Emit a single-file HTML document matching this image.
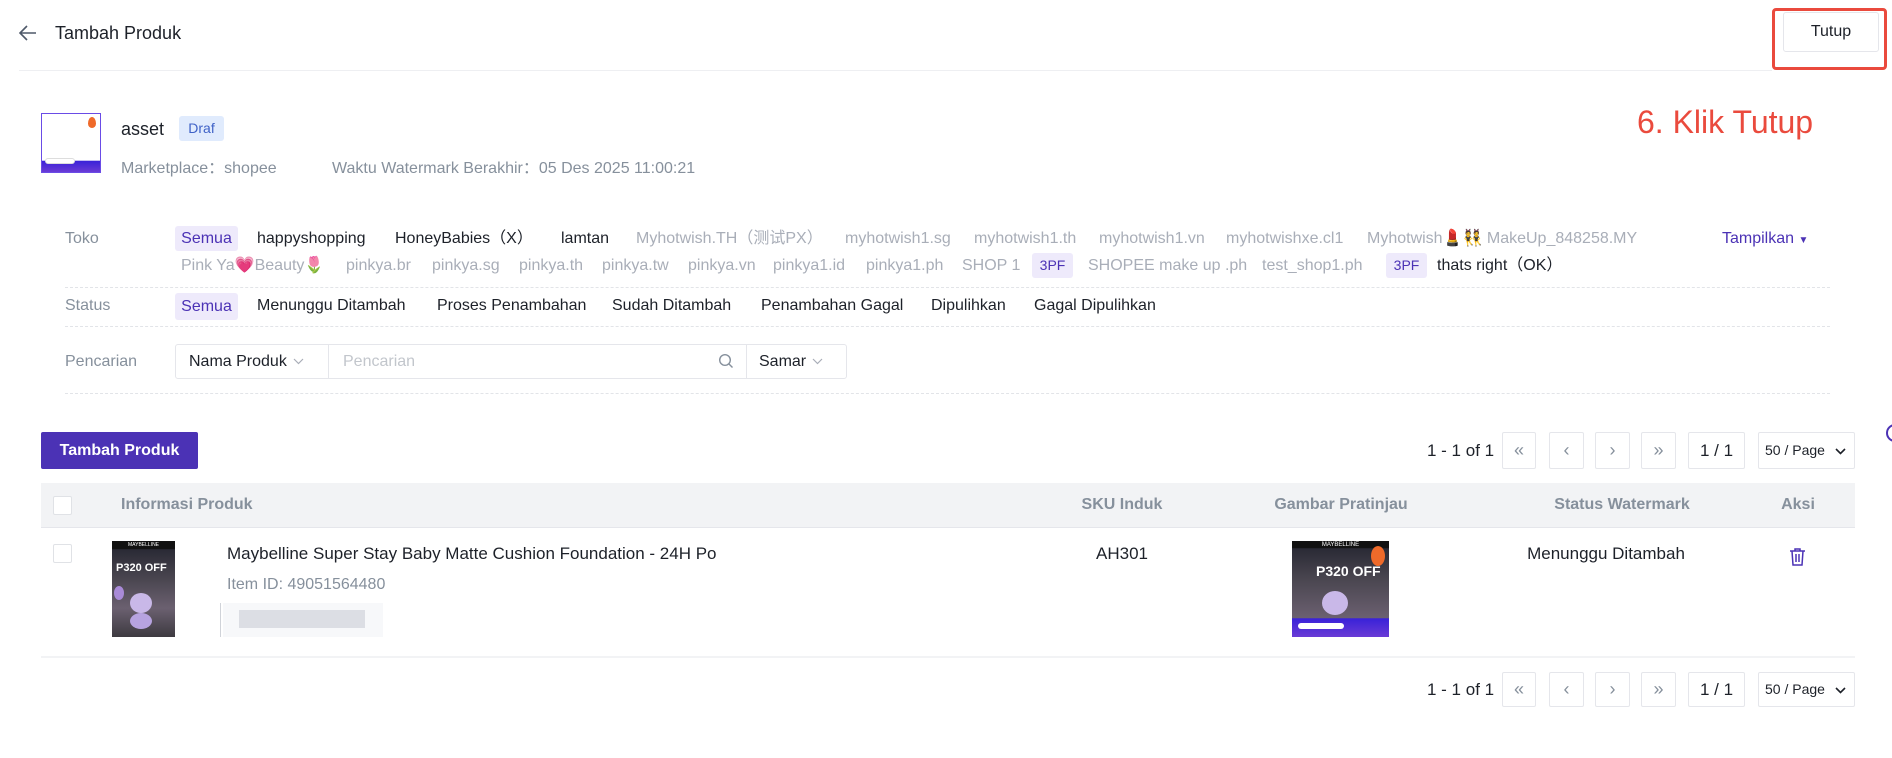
<!DOCTYPE html>
<html><head><meta charset="utf-8"><style>
*{box-sizing:border-box;margin:0;padding:0}
body{width:1892px;height:758px;background:#fff;font-family:"Liberation Sans","Noto Sans CJK SC",sans-serif;color:#1d2129;position:relative;overflow:hidden;font-size:16px}
.a{position:absolute;white-space:nowrap;line-height:20px}
.g{color:#a9aeb8}
.lbl{color:#86909c}
.tag{position:absolute;background:#eeeafb;color:#4b32b5;border-radius:3px;text-align:center}
.dash{position:absolute;left:65px;width:1765px;border-top:1px dashed #e2e4e8}
.pb{position:absolute;border:1px solid #e5e6eb;border-radius:2px;text-align:center;color:#86909c;font-size:18px}
.hd{position:absolute;top:495px;color:#86909c;font-size:16px;font-weight:bold;transform:translateX(-50%);line-height:20px}
.cb{position:absolute;width:19px;height:19px;border:1px solid #e0e2e6;border-radius:2px;background:#fff}
.img{position:absolute;background:linear-gradient(180deg,#111 0,#111 8%,#2a2a35 9%,#4a4650 40%,#6b6070 70%,#3d3a40 100%);overflow:hidden}
.chev{display:inline-block;vertical-align:middle;margin-left:6px}
</style></head><body>
<svg class="a" style="left:18px;top:24px" width="19" height="18" viewBox="0 0 19 18"><path d="M18 9H2M9 2L2 9l7 7" stroke="#4e5969" stroke-width="1.6" fill="none"/></svg>
<div class="a" style="left:55px;top:23px;font-size:18px;color:#1d2129">Tambah Produk</div>
<div class="a" style="left:1783px;top:12px;width:96px;height:40px;border:1px solid #e5e6eb;border-radius:3px;text-align:center;line-height:38px;font-size:16px">Tutup</div>
<div class="a" style="left:1772px;top:8px;width:115px;height:62px;border:3px solid #ea4a3d;border-radius:4px"></div>
<div class="a" style="left:19px;top:70px;width:1753px;border-top:1px solid #eeeff2"></div>

<div class="a" style="left:41px;top:113px;width:60px;height:60px;border:1px solid #6a4ce6;background:linear-gradient(180deg,#fff 0,#fff 80%,#3a22d8 81%,#6a3bd6 100%)"></div>
<div class="a" style="left:45px;top:158px;width:30px;height:6px;background:#fff;border:1px solid #ddd;border-radius:3px"></div>
<div class="a" style="left:88px;top:117px;width:8px;height:11px;background:#ef6a2a;border-radius:50% 50% 50% 50%/60% 60% 40% 40%"></div>
<div class="a" style="left:121px;top:118px;font-size:18px;line-height:22px">asset</div>
<div class="tag" style="left:179px;top:116px;width:45px;height:25px;line-height:25px;background:#e0ebfd;color:#3f62c7;font-size:14px">Draf</div>
<div class="a lbl" style="left:121px;top:159px">Marketplace：shopee</div>
<div class="a lbl" style="left:332px;top:159px">Waktu Watermark Berakhir：05 Des 2025 11:00:21</div>
<div class="a" style="left:1637px;top:102px;font-size:32px;line-height:40px;color:#ea4a3d">6. Klik Tutup</div>

<div class="a lbl" style="left:65px;top:229px">Toko</div>
<div class="tag" style="left:175px;top:226px;width:63px;height:25px;line-height:25px">Semua</div>
<div class="a" style="left:257px;top:229px">happyshopping</div>
<div class="a" style="left:395px;top:229px">HoneyBabies（X）</div>
<div class="a" style="left:561px;top:229px">lamtan</div>
<div class="a g" style="left:636px;top:229px">Myhotwish.TH（测试PX）</div>
<div class="a g" style="left:845px;top:229px">myhotwish1.sg</div>
<div class="a g" style="left:974px;top:229px">myhotwish1.th</div>
<div class="a g" style="left:1099px;top:229px">myhotwish1.vn</div>
<div class="a g" style="left:1226px;top:229px">myhotwishxe.cl1</div>
<div class="a g" style="left:1367px;top:229px">Myhotwish💄👯 MakeUp_848258.MY</div>
<div class="a" style="left:1722px;top:229px;color:#4b32b5">Tampilkan <span style="font-size:10px">▼</span></div>
<div class="a g" style="left:181px;top:256px">Pink Ya<span style="color:#e83a6b">💗</span>Beauty🌷</div>
<div class="a g" style="left:346px;top:256px">pinkya.br</div>
<div class="a g" style="left:432px;top:256px">pinkya.sg</div>
<div class="a g" style="left:519px;top:256px">pinkya.th</div>
<div class="a g" style="left:602px;top:256px">pinkya.tw</div>
<div class="a g" style="left:688px;top:256px">pinkya.vn</div>
<div class="a g" style="left:773px;top:256px">pinkya1.id</div>
<div class="a g" style="left:866px;top:256px">pinkya1.ph</div>
<div class="a g" style="left:962px;top:256px">SHOP 1</div>
<div class="tag" style="left:1032px;top:253px;width:41px;height:25px;line-height:25px;font-size:14px">3PF</div>
<div class="a g" style="left:1088px;top:256px">SHOPEE make up .ph</div>
<div class="a g" style="left:1262px;top:256px">test_shop1.ph</div>
<div class="tag" style="left:1386px;top:253px;width:41px;height:25px;line-height:25px;font-size:14px">3PF</div>
<div class="a" style="left:1437px;top:256px">thats right（OK）</div>
<div class="dash" style="top:287px"></div>

<div class="a lbl" style="left:65px;top:296px">Status</div>
<div class="tag" style="left:175px;top:293px;width:63px;height:27px;line-height:27px">Semua</div>
<div class="a" style="left:257px;top:296px">Menunggu Ditambah</div>
<div class="a" style="left:437px;top:296px">Proses Penambahan</div>
<div class="a" style="left:612px;top:296px">Sudah Ditambah</div>
<div class="a" style="left:761px;top:296px">Penambahan Gagal</div>
<div class="a" style="left:931px;top:296px">Dipulihkan</div>
<div class="a" style="left:1034px;top:296px">Gagal Dipulihkan</div>
<div class="dash" style="top:326px"></div>

<div class="a lbl" style="left:65px;top:352px">Pencarian</div>
<div class="a" style="left:175px;top:344px;width:672px;height:35px;border:1px solid #e5e6eb;border-radius:3px"></div>
<div class="a" style="left:328px;top:345px;height:33px;border-left:1px solid #e5e6eb"></div>
<div class="a" style="left:746px;top:345px;height:33px;border-left:1px solid #e5e6eb"></div>
<div class="a" style="left:189px;top:352px">Nama Produk<svg class="chev" width="11" height="7" viewBox="0 0 11 7"><path d="M1 1l4.5 4.5L10 1" stroke="#a9aeb8" stroke-width="1.2" fill="none"/></svg></div>
<div class="a" style="left:343px;top:352px;color:#c2c6cc">Pencarian</div>
<svg class="a" style="left:718px;top:353px" width="16" height="16" viewBox="0 0 16 16"><circle cx="7" cy="7" r="5.3" stroke="#86909c" stroke-width="1.4" fill="none"/><path d="M11 11l3.5 3.5" stroke="#86909c" stroke-width="1.4"/></svg>
<div class="a" style="left:759px;top:352px">Samar<svg class="chev" width="11" height="7" viewBox="0 0 11 7"><path d="M1 1l4.5 4.5L10 1" stroke="#a9aeb8" stroke-width="1.2" fill="none"/></svg></div>
<div class="dash" style="top:393px"></div>

<div class="a" style="left:41px;top:432px;width:157px;height:37px;background:#4b32b5;border-radius:2px;color:#fff;font-weight:bold;font-size:16px;text-align:center;line-height:37px">Tambah Produk</div>
<div class="a" style="left:1886px;top:424px;width:18px;height:18px;border:2px solid #4b32b5;border-radius:50%"></div>

<div class="a" style="left:1427px;top:441px;font-size:17px">1 - 1 of 1</div>
<div class="pb" style="left:1502px;top:432px;width:34px;height:37px;line-height:35px">«</div>
<div class="pb" style="left:1549px;top:432px;width:35px;height:37px;line-height:35px">‹</div>
<div class="pb" style="left:1595px;top:432px;width:35px;height:37px;line-height:35px">›</div>
<div class="pb" style="left:1641px;top:432px;width:35px;height:37px;line-height:35px">»</div>
<div class="pb" style="left:1688px;top:432px;width:57px;height:37px;line-height:35px;color:#1d2129;font-size:17px">1 / 1</div>
<div class="pb" style="left:1758px;top:432px;width:97px;height:37px;line-height:35px;color:#1d2129;font-size:14px;text-align:left;padding-left:6px">50 / Page <svg style="position:absolute;right:8px;top:15px" width="11" height="7" viewBox="0 0 11 7"><path d="M1 1l4.5 4.5L10 1" stroke="#1d2129" stroke-width="1.6" fill="none"/></svg></div>

<div class="a" style="left:41px;top:483px;width:1814px;height:45px;background:#f2f3f5;border-bottom:1px solid #e5e6eb"></div>
<div class="cb" style="left:53px;top:496px"></div>
<div class="a" style="left:121px;top:495px;color:#86909c;font-weight:bold">Informasi Produk</div>
<div class="hd" style="left:1122px">SKU Induk</div>
<div class="hd" style="left:1341px">Gambar Pratinjau</div>
<div class="hd" style="left:1622px">Status Watermark</div>
<div class="hd" style="left:1798px">Aksi</div>

<div class="cb" style="left:53px;top:544px"></div>
<div class="img" style="left:112px;top:541px;width:63px;height:96px">
 <div style="position:absolute;left:0;top:1px;width:100%;text-align:center;color:#fff;font-size:5px">MAYBELLINE</div>
 <div style="position:absolute;left:4px;top:21px;color:#fff;font-size:11px;font-weight:bold">P320 OFF</div>
 <div style="position:absolute;left:18px;top:52px;width:22px;height:20px;border-radius:50%;background:#c9b8e8"></div>
 <div style="position:absolute;left:18px;top:72px;width:22px;height:16px;border-radius:50%;background:#b7a3e0"></div>
 <div style="position:absolute;left:2px;top:45px;width:10px;height:14px;border-radius:50%;background:#a98ad8"></div>
</div>
<div class="a" style="left:227px;top:544px;font-size:17px">Maybelline Super Stay Baby Matte Cushion Foundation - 24H Po</div>
<div class="a lbl" style="left:227px;top:575px">Item ID: 49051564480</div>
<div class="a" style="left:220px;top:603px;height:34px;border-left:1px solid #d0d3d9"></div>
<div class="a" style="left:223px;top:603px;width:160px;height:34px;background:#f7f8fa"></div>
<div class="a" style="left:239px;top:610px;width:126px;height:18px;background:#dcdee4"></div>
<div class="a" style="left:1122px;top:544px;font-size:17px;transform:translateX(-50%)">AH301</div>
<div class="img" style="left:1292px;top:541px;width:97px;height:96px;background:linear-gradient(180deg,#111 0,#111 7%,#2a2a35 8%,#4a4650 40%,#6b6070 80%,#3a22d8 81%,#6a3bd6 100%)">
 <div style="position:absolute;left:0;top:1px;width:100%;text-align:center;color:#fff;font-size:6px">MAYBELLINE</div>
 <div style="position:absolute;left:24px;top:22px;color:#fff;font-size:14px;font-weight:bold">P320 OFF</div>
 <div style="position:absolute;right:4px;top:5px;width:14px;height:20px;border-radius:50%;background:#ef6a2a"></div>
 <div style="position:absolute;left:30px;top:50px;width:26px;height:24px;border-radius:50%;background:#c9b8e8"></div>
 <div style="position:absolute;left:6px;top:82px;width:46px;height:6px;border-radius:3px;background:#fff"></div>
</div>
<div class="a" style="left:1606px;top:544px;font-size:17px;transform:translateX(-50%)">Menunggu Ditambah</div>
<svg class="a" style="left:1789px;top:547px" width="17" height="19" viewBox="0 0 17 19"><path d="M1 4h15M6 4V2h5v2M3 4l1 14h9l1-14M7 7v8M10 7v8" stroke="#4b32b5" stroke-width="1.5" fill="none"/></svg>
<div class="a" style="left:41px;top:656px;width:1814px;border-top:2px solid #f2f3f5"></div>

<div class="a" style="left:1427px;top:680px;font-size:17px">1 - 1 of 1</div>
<div class="pb" style="left:1502px;top:672px;width:34px;height:35px;line-height:33px">«</div>
<div class="pb" style="left:1549px;top:672px;width:35px;height:35px;line-height:33px">‹</div>
<div class="pb" style="left:1595px;top:672px;width:35px;height:35px;line-height:33px">›</div>
<div class="pb" style="left:1641px;top:672px;width:35px;height:35px;line-height:33px">»</div>
<div class="pb" style="left:1688px;top:672px;width:57px;height:35px;line-height:33px;color:#1d2129;font-size:17px">1 / 1</div>
<div class="pb" style="left:1758px;top:672px;width:97px;height:35px;line-height:33px;color:#1d2129;font-size:14px;text-align:left;padding-left:6px">50 / Page <svg style="position:absolute;right:8px;top:14px" width="11" height="7" viewBox="0 0 11 7"><path d="M1 1l4.5 4.5L10 1" stroke="#1d2129" stroke-width="1.6" fill="none"/></svg></div>
</body></html>
